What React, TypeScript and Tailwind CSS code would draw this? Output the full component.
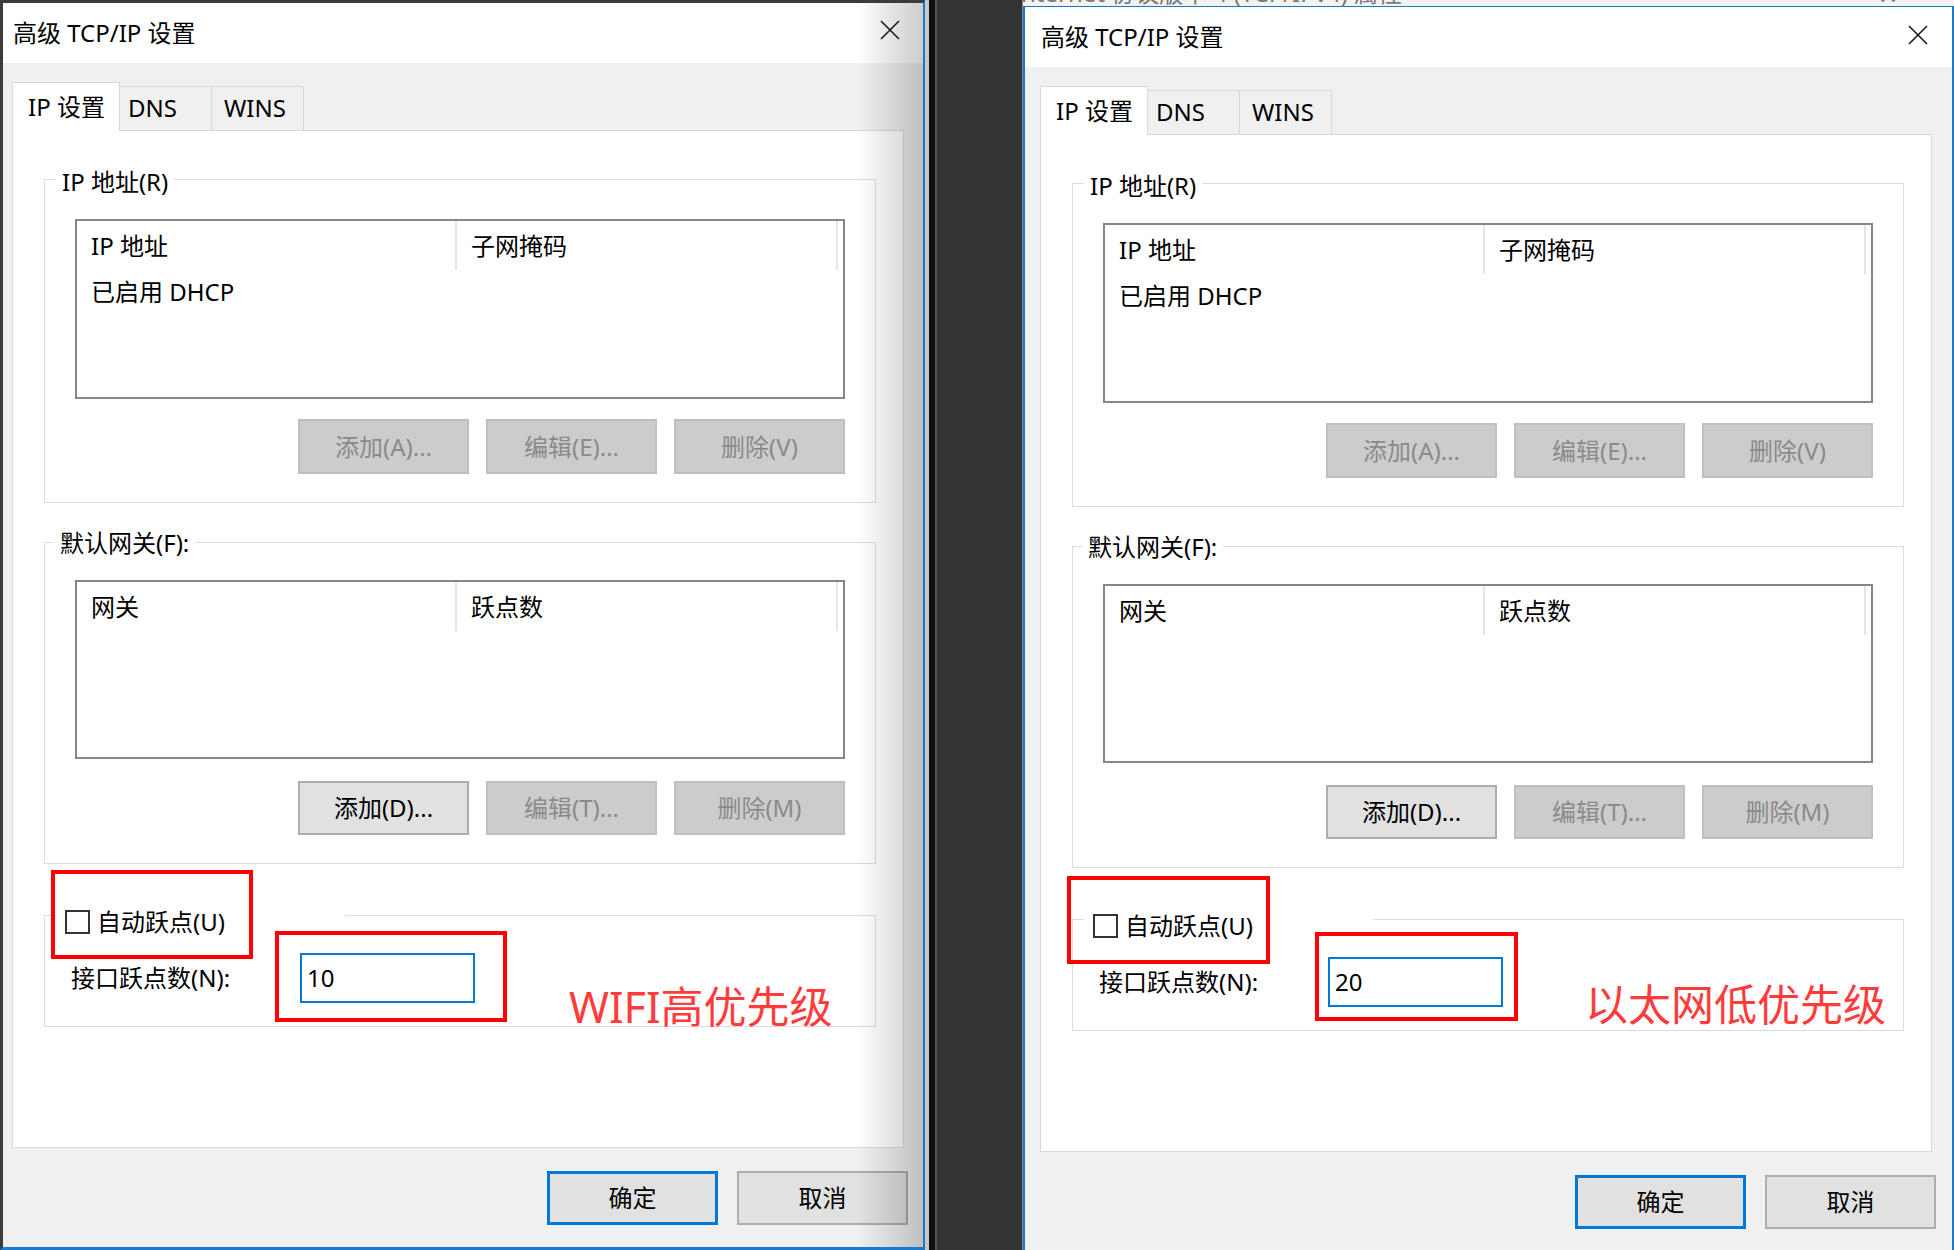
function CloseIcon() {
  return (
    <svg width="20" height="20" viewBox="0 0 20 20" className="block">
      <path d="M1 1L19 19M19 1L1 19" stroke="#1a1a1a" strokeWidth="1.6" />
    </svg>
  )
}

type BtnState = 'disabled' | 'normal' | 'default'

function Button({ label, state, h = 'h-[55px]' }: { label: string; state: BtnState; h?: string }) {
  const look =
    state === 'disabled'
      ? 'bg-[#cccccc] border-2 border-[#bfbfbf] text-[#8a8a8a]'
      : state === 'default'
        ? 'bg-[#e1e1e1] border-[3px] border-[#0078d7] text-black'
        : 'bg-[#e1e1e1] border-2 border-[#adadad] text-black'
  return (
    <div className={`flex w-[171px] items-center justify-center leading-[24px] ${h} ${look}`}>
      {label}
    </div>
  )
}

function ListView({ a, b, row, h }: { a: string; b: string; row?: string; h: string }) {
  return (
    <div className={`border-2 border-[#828790] bg-white ${h}`}>
      <div className="flex h-[49px]">
        <div className="flex w-[380px] items-center border-r-2 border-[#e5e5e5] pl-[14px]">{a}</div>
        <div className="flex w-[381px] items-center border-r-2 border-[#e5e5e5] pl-[14px]">{b}</div>
      </div>
      {row && <div className="pl-[14px] pt-[10px] leading-[24px]">{row}</div>}
    </div>
  )
}

function GroupBox({
  legend,
  legendLeft,
  legendTop,
  className,
  children,
}: {
  legend: string
  legendLeft: string
  legendTop: string
  className: string
  children: React.ReactNode
}) {
  return (
    <div className={`relative border border-[#dcdcdc] ${className}`}>
      <div className={`absolute bg-white px-[6px] leading-[24px] ${legendLeft} ${legendTop}`}>{legend}</div>
      {children}
    </div>
  )
}

function DialogBody({ metric }: { metric: string }) {
  return (
    <div className="flex flex-1 flex-col bg-[#f0f0f0]">
      {/* tabs */}
      <div className="flex h-[48px] items-end">
        <div className="relative z-10 -mb-px h-[49px] w-[108px] border border-b-0 border-[#d9d9d9] bg-white pl-[15px] pt-[12px] leading-[24px]">
          IP 设置
        </div>
        <div className="-ml-px h-[44px] w-[93px] border border-b-0 border-[#d9d9d9] bg-[#f0f0f0] pl-[8px] pt-[9px] leading-[24px]">
          DNS
        </div>
        <div className="-ml-px h-[44px] w-[93px] border border-b-0 border-[#d9d9d9] bg-[#f0f0f0] pl-[12px] pt-[9px] leading-[24px]">
          WINS
        </div>
      </div>

      {/* tab page */}
      <div className="flex h-[1018px] w-[892px] flex-col border border-[#d9d9d9] bg-white pl-[31px] pt-[48px]">
        <GroupBox
          legend="IP 地址(R)"
          legendLeft="left-[11px]"
          legendTop="top-[-10px]"
          className="w-[832px] px-[30px] pb-[28px] pt-[39px]"
        >
          <ListView a="IP 地址" b="子网掩码" row="已启用 DHCP" h="h-[180px]" />
          <div className="mt-[20px] flex justify-end gap-[17px]">
            <Button label="添加(A)..." state="disabled" />
            <Button label="编辑(E)..." state="disabled" />
            <Button label="删除(V)" state="disabled" />
          </div>
        </GroupBox>

        <GroupBox
          legend="默认网关(F):"
          legendLeft="left-[9px]"
          legendTop="top-[-12px]"
          className="mt-[39px] w-[832px] px-[30px] pb-[28px] pt-[37px]"
        >
          <ListView a="网关" b="跃点数" h="h-[179px]" />
          <div className="mt-[22px] flex justify-end gap-[17px]">
            <Button label="添加(D)..." state="normal" h="h-[54px]" />
            <Button label="编辑(T)..." state="disabled" h="h-[54px]" />
            <Button label="删除(M)" state="disabled" h="h-[54px]" />
          </div>
        </GroupBox>

        <div className="relative mt-[51px] w-[832px] border border-[#dcdcdc] pb-[23px] pl-[26px] pt-[37px]">
          <div className="absolute left-[11px] top-[-9px] flex h-[30px] w-[289px] items-center gap-[7px] bg-white pl-[9px]">
            <div className="h-[24px] w-[25px] border-2 border-[#333333] bg-white" />
            <span className="leading-[24px]">自动跃点(U)</span>
          </div>
          <div className="flex items-center">
            <div className="w-[229px] leading-[24px]">接口跃点数(N):</div>
            <div className="flex h-[50px] w-[175px] items-center border-2 border-[#0078d7] pl-[5px] leading-[24px]">
              {metric}
            </div>
          </div>
        </div>
      </div>

      {/* dialog buttons */}
      <div className="-mr-[4px] mt-[23px] flex justify-end gap-[19px]">
        <Button label="确定" state="default" h="h-[54px]" />
        <Button label="取消" state="normal" h="h-[54px]" />
      </div>
    </div>
  )
}

export default function App() {
  return (
    <div className="relative flex h-[1250px] w-[1954px] overflow-hidden bg-[#333333] font-['Noto_Sans','Noto_Sans_CJK_SC',sans-serif] text-[24px] text-black">
      {/* left dialog */}
      <div className="relative flex h-[1250px] w-[925px] shrink-0 flex-col border-b-[3px] border-l-[3px] border-r-2 border-t-[3px] border-b-[#1979ca] border-l-[#3b3b3b] border-r-[#1979ca] border-t-[#3b3b3b]">
        <div className="flex h-[60px] items-center justify-between bg-white pl-[10px] pr-[23px]">
          <span className="leading-[24px]">高级 TCP/IP 设置</span>
          <div className="mb-[6px]">
            <CloseIcon />
          </div>
        </div>
        <div className="flex flex-1 flex-col bg-[#f0f0f0] pl-[9px] pr-[19px] pt-[19px]">
          <DialogBody metric="10" />
        </div>
        <div className="pointer-events-none absolute bottom-0 right-0 top-0 w-[66px] bg-linear-to-r from-transparent to-black/20" />
      </div>

      {/* desktop gap */}
      <div className="flex w-[98px] shrink-0">
        <div className="w-[4px] bg-[#c9c9c9]" />
        <div className="w-[6px] bg-[#111111]" />
        <div className="w-[2px] bg-[#555555]" />
        <div className="flex-1 bg-[#333333]" />
        <div className="w-px bg-[#8c8c8c]" />
      </div>

      {/* right dialog */}
      <div className="flex h-[1250px] w-[931px] shrink-0 flex-col">
        <div className="relative h-[6px] overflow-hidden bg-[#f2f2f2]">
          <span className="absolute left-[-2px] top-[-19px] whitespace-nowrap leading-[24px] text-[#7a7a7a]">
            nternet 协议版本 4 (TCP/IPv4) 属性
          </span>
          <span className="absolute left-[855px] top-[-17px] leading-[24px] text-[#7a7a7a]">✕</span>
        </div>
        <div className="flex flex-1 flex-col border-l-2 border-r-2 border-t border-[#1979ca]">
          <div className="flex h-[60px] items-center justify-between bg-white pl-[16px] pr-[24px]">
            <span className="leading-[24px]">高级 TCP/IP 设置</span>
            <div className="mb-[4px]">
              <CloseIcon />
            </div>
          </div>
          <div className="flex flex-1 flex-col bg-[#f0f0f0] pl-[15px] pr-[20px] pt-[19px]">
            <DialogBody metric="20" />
          </div>
        </div>
      </div>

      {/* red annotations */}
      <div className="absolute left-[51px] top-[870px] h-[89px] w-[202px] border-4 border-[#ff0000]" />
      <div className="absolute left-[275px] top-[931px] h-[91px] w-[232px] border-4 border-[#ff0000]" />
      <div className="absolute left-[569px] top-[985px] whitespace-nowrap text-[43px] leading-[43px] text-[#ff3b3b]">
        WIFI高优先级
      </div>
      <div className="absolute left-[1067px] top-[876px] h-[88px] w-[203px] border-4 border-[#ff0000]" />
      <div className="absolute left-[1315px] top-[932px] h-[89px] w-[203px] border-4 border-[#ff0000]" />
      <div className="absolute left-[1585px] top-[983px] whitespace-nowrap text-[43px] leading-[43px] text-[#ff3b3b]">
        以太网低优先级
      </div>
    </div>
  )
}
